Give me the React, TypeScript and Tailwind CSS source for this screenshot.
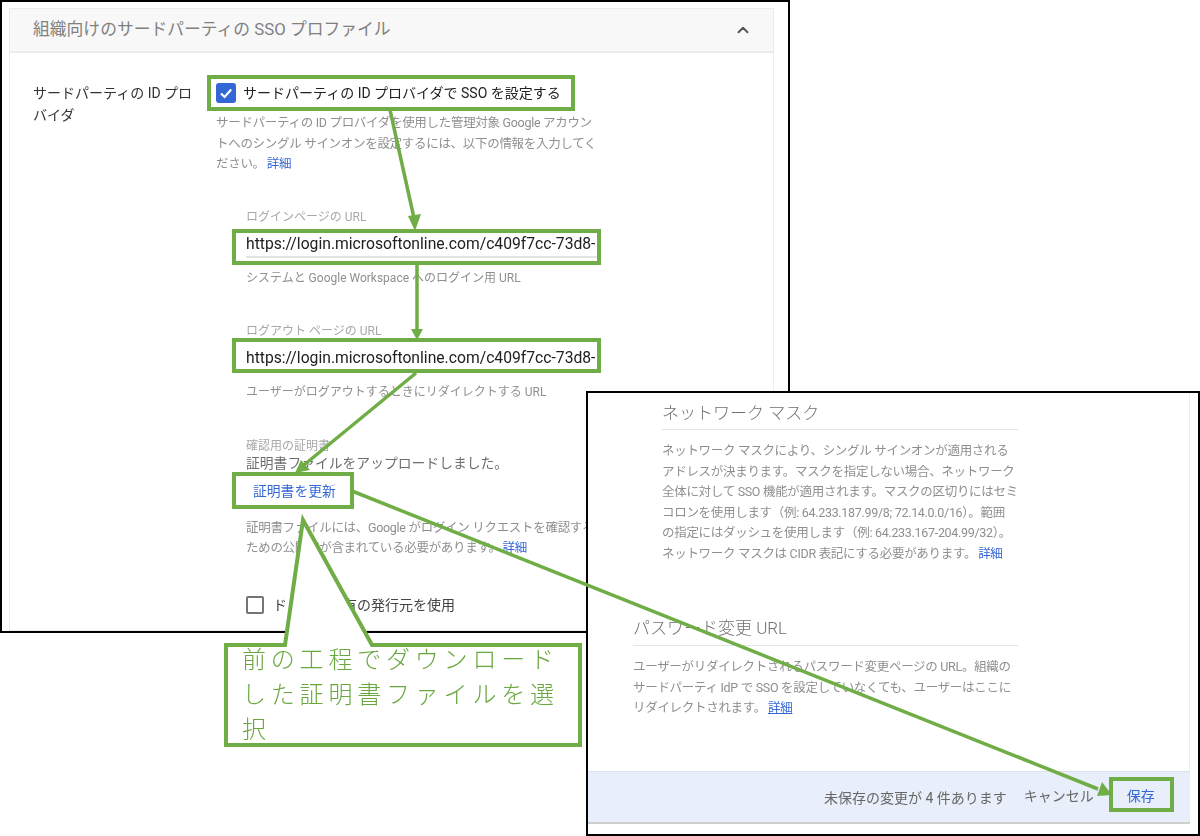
import { ChevronUp } from 'lucide-react'

const font = "font-['Roboto','Noto_Sans_CJK_JP',sans-serif]"

const Help = ({ children }: { children: React.ReactNode }) => (
  <p className="whitespace-nowrap text-[12.5px] leading-[20.5px] text-[#8f8f8f] tracking-[-0.3px]">{children}</p>
)

const More = () => <a className="ml-[2px] text-[#3367d6]">詳細</a>

const UrlField = ({ label, help }: { label: string; help: string }) => (
  <div className="w-[351px]">
    <div className="h-[20px] text-[12px] leading-[20px] text-[#a8a8a8]">{label}</div>
    <div className="mt-[5px] h-[26px] overflow-hidden whitespace-nowrap border-b-2 border-[#e4e4e4] text-[15.7px] leading-[24px] text-[#202020]">
      https://login.microsoftonline.com/c409f7cc-73d8-
    </div>
    <div className="mt-[11px] text-[12px] leading-[18px] text-[#8f8f8f]">{help}</div>
  </div>
)

const LeftWindow = () => (
  <div className="absolute left-0 top-0 h-[633px] w-[790px] overflow-hidden border-2 border-black bg-white pl-[7px] pr-[14px] pt-[6px]">
    <div className="h-full border border-[#ececec] blur-[0.3px]">
      <div className="flex h-[44px] items-center justify-between border-b-2 border-[#ececec] bg-[#f8f8f8] pl-[23px] pr-[21px]">
        <span className="text-[16.8px] text-[#808080]">組織向けのサードパーティの SSO プロファイル</span>
        <ChevronUp strokeWidth={2.5} className="h-[18px] w-[18px] text-[#555555]" />
      </div>
      <div className="flex pl-[23px] pt-[29px]">
        <div className="w-[183px] shrink-0 text-[14px] leading-[22px] text-[#333333]">
          サードパーティの ID プロ
          <br />
          バイダ
        </div>
        <div className="w-[385px] shrink-0">
          <div className="flex h-[22px] items-center">
            <span className="flex h-[20px] w-[20px] items-center justify-center rounded-[3px] bg-[#3367d6]">
              <svg viewBox="0 0 20 20" className="h-[20px] w-[20px]" fill="none" stroke="white" strokeWidth="2.2">
                <path d="M5 10.5 L8.6 14 L15.2 6.6" />
              </svg>
            </span>
            <span className="ml-[7px] whitespace-nowrap text-[14px] text-[#222222]">
              サードパーティの ID プロバイダで SSO を設定する
            </span>
          </div>
          <div className="mt-[9px]">
            <Help>
              サードパーティの ID プロバイダを使用した管理対象 Google アカウン
              <br />
              トへのシングル サインオンを設定するには、以下の情報を入力してく
              <br />
              ださい。
              <More />
            </Help>
          </div>
          <div className="ml-[30px] mt-[32px]">
            <UrlField label="ログインページの URL" help="システムと Google Workspace へのログイン用 URL" />
            <div className="mt-[34px]">
              <UrlField label="ログアウト ページの URL" help="ユーザーがログアウトするときにリダイレクトする URL" />
            </div>
            <div className="mt-[35px] whitespace-nowrap">
              <div className="h-[17px] text-[12px] leading-[20px] text-[#a8a8a8]">確認用の証明書</div>
              <div className="text-[13.8px] leading-[20px] text-[#6e6e6e]">証明書ファイルをアップロードしました。</div>
              <div className="mt-[8px] pl-[7px] text-[13.8px] leading-[20px] text-[#3367d6]">証明書を更新</div>
              <div className="mt-[17px]">
                <Help>
                  証明書ファイルには、Google がログイン リクエストを確認する
                  <br />
                  ための公開鍵が含まれている必要があります。
                  <More />
                </Help>
              </div>
              <div className="mt-[36px] flex items-center">
                <span className="h-[18px] w-[18px] rounded-[2px] border-2 border-[#757575]" />
                <span className="ml-[9px] text-[14px] text-[#444444]">ドメイン固有の発行元を使用</span>
              </div>
            </div>
          </div>
        </div>
      </div>
    </div>
  </div>
)

const RightWindow = () => (
  <div className="absolute left-[586px] top-[391px] flex h-[445px] w-[614px] flex-col border-2 border-black bg-white pr-[8px]">
    <div className="flex-1 border-r border-[#ededed] pl-[45px] pr-[171px] blur-[0.3px]">
      <div className="pl-[29px]">
        <div className="h-[37px] border-b border-[#e4e4e4] pt-[7px] text-[17px] font-light leading-[26px] text-[#707070]">ネットワーク マスク</div>
        <div className="mt-[11px]">
          <Help>
            ネットワーク マスクにより、シングル サインオンが適用される
            <br />
            アドレスが決まります。マスクを指定しない場合、ネットワーク
            <br />
            全体に対して SSO 機能が適用されます。マスクの区切りにはセミ
            <br />
            コロンを使用します（例: 64.233.187.99/8; 72.14.0.0/16）。範囲
            <br />
            の指定にはダッシュを使用します（例: 64.233.167-204.99/32）。
            <br />
            ネットワーク マスクは CIDR 表記にする必要があります。
            <More />
          </Help>
        </div>
      </div>
      <div className="mt-[51px] h-[31px] border-b border-[#e4e4e4] text-[17px] font-light leading-[26px] text-[#707070]">パスワード変更 URL</div>
      <div className="mt-[11px]">
        <Help>
          ユーザーがリダイレクトされるパスワード変更ページの URL。組織の
          <br />
          サードパーティ IdP で SSO を設定していなくても、ユーザーはここに
          <br />
          リダイレクトされます。
          <a className="ml-[2px] text-[#3367d6] underline">詳細</a>
        </Help>
      </div>
    </div>
    <div className="mb-[10px] flex h-[53px] items-center border-b-2 border-t border-b-[#cfcfcf] border-t-[#dbe3f0] bg-[#e8effb] pl-[236px] blur-[0.3px]">
      <span className="mt-[3px] text-[14px] text-[#666666]">未保存の変更が 4 件あります</span>
      <span className="mb-[1px] ml-[17px] text-[14px] text-[#666666]">キャンセル</span>
      <span className="mb-[1px] ml-[33px] text-[14px] text-[#3367d6]">保存</span>
    </div>
  </div>
)

// green annotations drawn over both screenshots
const Annotations = () => (
  <svg className="absolute left-0 top-0 h-[836px] w-[1200px]" viewBox="0 0 1200 836" fill="none">
    <g stroke="#70ad47" strokeWidth="4">
      <rect x="209" y="77" width="364" height="32" />
      <rect x="234" y="231" width="365" height="32" />
      <rect x="234" y="340" width="365" height="31" />
      <rect x="234" y="474" width="118" height="33" />
      <rect x="1111" y="779" width="61" height="31" />
    </g>
    <g stroke="#70ad47" strokeWidth="3.5">
      <path d="M390 110 L414 218" />
      <path d="M417 265 L417 330" />
      <path d="M416 373 L304 465" />
      <path d="M352 491 L1098 789" />
    </g>
    <g fill="#70ad47">
      <path d="M415 231 L408 216 L421 214 Z" />
      <path d="M417 340 L411 329 L423 329 Z" />
      <path d="M295 473 L301 460 L310 470 Z" />
      <path d="M1112 795 L1097 796 L1102 782 Z" />
    </g>
    <path
      d="M226 645 L285 645 L303 520 L372 645 L580 645 L580 745 L226 745 Z"
      fill="white"
      stroke="#70ad47"
      strokeWidth="4"
    />
  </svg>
)

export default function App() {
  return (
    <div className={`relative h-[836px] w-[1200px] overflow-hidden bg-white ${font}`}>
      <LeftWindow />
      <RightWindow />
      <Annotations />
      <div className="absolute left-[242px] top-[643px] w-[330px] text-[24px] font-light leading-[35px] tracking-[4.8px] text-[#6aa83f]">
        前の工程でダウンロードした証明書ファイルを選択
      </div>
    </div>
  )
}
